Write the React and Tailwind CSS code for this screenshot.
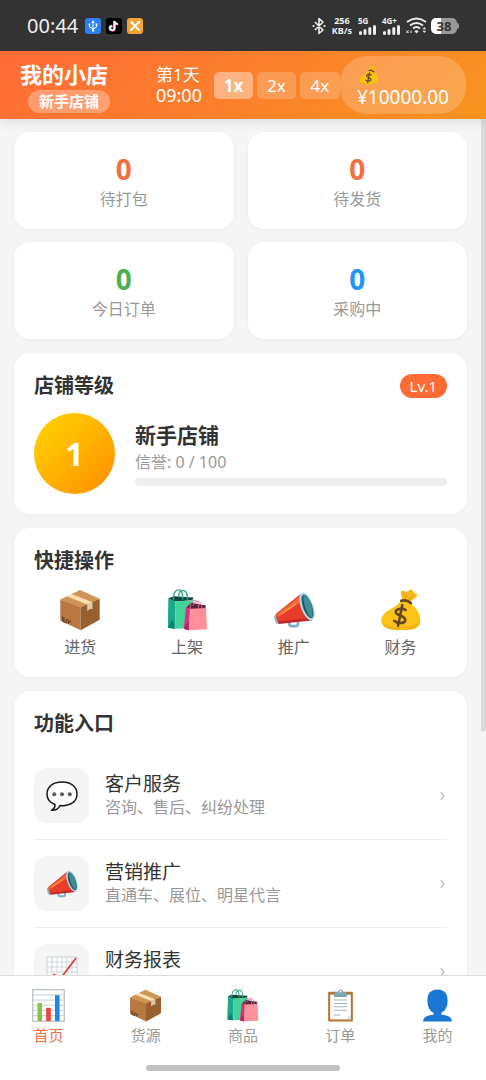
import React from "react";

function BoxIcon({ className }) {
  return (
    <svg viewBox="0 0 128 128" className={className} aria-hidden="true">
      <path d="M4 32 66 54V126L4 96Z" fill="#B87840" />
      <path d="M66 54 124 30V94L66 126Z" fill="#99602F" />
      <path d="M4 32 64 3 124 30 66 56Z" fill="#CF9457" />
      <path d="M24 22 38 15 102 40 86 47Z" fill="#FBE0AE" />
      <path d="M86 47 102 40V62L95 60 86 68Z" fill="#DCC9B0" />
      <path d="M11 84v15l9 4M15 86v14M22 92v13M27 92l-2 3 4 3v9M33 96v4m-2-2 6 3" stroke="#5D3A1C" strokeWidth="3" fill="none" />
    </svg>
  );
}

function BagsIcon({ className }) {
  return (
    <svg viewBox="0 0 128 128" className={className} aria-hidden="true">
      <path d="M8 28 26 22 28 114 6 119Z" fill="#139C82" />
      <path d="M8 28 24 22 84 26 80 34 28 38Z" fill="#12473F" />
      <path d="M28 38 84 34V118L28 121Z" fill="#42D39B" />
      <path d="M8 28 28 38 27 121 6 118Z" fill="#1BA98B" />
      <path d="M6 118 19 92 28 121Z" fill="#0B806D" />
      <path d="M22 33C23 5 34 1 41 3c10 3 10 15 10 29M38 23C38 7 48 3 55 5c11 4 10 15 10 28" stroke="#36A78D" strokeWidth="4" fill="none" />
      <path d="M61 58 76 42 122 50 118 61 73 62Z" fill="#582239" />
      <path d="M61 55 73 60 71 126 54 121Z" fill="#D63578" />
      <path d="M73 60 122 58 125 123 69 126Z" fill="#FF8F9A" />
      <path d="M54 121 67 99 70 126Z" fill="#AF215F" />
      <path d="M73 62C74 34 84 34 91 36c9 3 9 12 8 24M82 51C84 39 93 38 101 39c9 3 8 13 8 20" stroke="#E56F91" strokeWidth="3" fill="none" />
    </svg>
  );
}

function MegaphoneIcon({ className }) {
  return (
    <svg viewBox="0 0 128 128" className={className} aria-hidden="true">
      <path d="M50 92v15q0 6 6 6h14q6 0 6-6V94" fill="none" stroke="#82AEC0" strokeWidth="8" />
      <path d="M3 82 14 73 21 107 10 106Q4 95 3 82Z" fill="#90B8C7" />
      <path d="M10 75 88 12Q99 45 119 94L16 104Q8 88 10 75Z" fill="#E83C2C" />
      <path d="M12 77 90 17 96 32 15 86Z" fill="#FF6533" />
      <path d="M25 76 70 45" stroke="#FF964B" strokeWidth="5" />
      <path d="M17 99 118 87V96L18 107Z" fill="#BD2C2B" />
      <ellipse cx="104" cy="53" rx="19" ry="45" transform="rotate(-20 104 53)" fill="#B7DCE7" />
      <ellipse cx="105" cy="53" rx="14" ry="38" transform="rotate(-20 105 53)" fill="#256774" />
      <path d="M94 18C115 24 127 74 116 88 103 81 89 34 94 18Z" fill="#438B98" />
      <path d="M92 34c4 22 11 43 24 54-14-5-28-40-24-54Z" fill="#164F5D" />
    </svg>
  );
}

function MoneyIcon({ className }) {
  return (
    <svg viewBox="0 0 128 128" className={className} aria-hidden="true">
      <path d="M68 34C67 21 61 12 64 7c5-5 13 2 18 1 7-1 8-8 15-6 4 1 3 6 7 9 5 3 10 5 9 9-1 5-10 9-17 16L87 43Z" fill="#F5B91B" />
      <path d="M76 34 82 17M85 35 101 20" stroke="#D99414" strokeWidth="3" />
      <path d="M65 37Q78 33 95 45C115 61 124 81 123 99 122 119 99 125 66 125 28 125 5 119 4 97 3 74 31 62 45 53 56 47 58 39 65 37Z" fill="#FBC318" />
      <path d="M8 104Q33 119 70 116T122 101C119 120 100 125 67 125 35 125 12 121 8 104Z" fill="#F3B515" />
      <path d="M65 36Q80 31 94 43" stroke="#654526" strokeWidth="8" strokeLinecap="round" fill="none" />
      <path d="M78 64C71 58 51 58 48 69 45 81 78 80 77 94 76 108 52 105 43 97M68 49 55 112" stroke="#654526" strokeWidth="8" strokeLinecap="round" fill="none" />
    </svg>
  );
}

function ChatIcon({ className }) {
  return (
    <svg viewBox="0 0 128 128" className={className} aria-hidden="true">
      <path d="M64 8C27 8 4 28 4 56c0 21 13 35 32 42 1 10-5 18-14 23 18 1 29-8 34-19 42 4 68-16 68-46 0-29-24-48-60-48Z" fill="#fff" stroke="#171717" strokeWidth="6" strokeLinejoin="round" />
      <g fill="#5b5b5b"><circle cx="33" cy="57" r="8" /><circle cx="64" cy="57" r="8" /><circle cx="95" cy="57" r="8" /></g>
    </svg>
  );
}

function TrendIcon({ className }) {
  return (
    <svg viewBox="0 0 128 128" className={className} aria-hidden="true">
      <path d="M4 4H124V124H4Z" fill="#fff" stroke="#B4C0C5" strokeWidth="3" />
      <path d="M24 4v120M44 4v120M64 4v120M84 4v120M104 4v120M4 24h120M4 44h120M4 64h120M4 84h120M4 104h120" stroke="#BECACE" strokeWidth="3" />
      <path d="M6 109 33 74 57 92 120 8" stroke="#D83F3C" strokeWidth="7" fill="none" />
    </svg>
  );
}

function ChartIcon({ className }) {
  return (
    <svg viewBox="0 0 128 128" className={className} aria-hidden="true">
      <path d="M3 3H125V125H3Z" fill="#fff" stroke="#A7B3B9" strokeWidth="4" />
      <path d="M3 23h122M3 43h122M3 63h122M3 83h122M3 103h122" stroke="#B9C5CB" strokeWidth="3" />
      <path d="M21 54h18v70H21Z" fill="#8BC34A" />
      <path d="M55 73h18v51H55Z" fill="#F44336" />
      <path d="M89 24h18v100H89Z" fill="#1E88E5" />
    </svg>
  );
}

function ClipboardIcon({ className }) {
  return (
    <svg viewBox="0 0 128 128" className={className} aria-hidden="true">
      <rect x="16" y="11" width="96" height="115" rx="5" fill="#B87536" />
      <path d="M24 22H104V118H24Z" fill="#fff" />
      <path d="M84 118 104 101V118Z" fill="#CED8DC" />
      <path d="M38 43h52M38 56h52M38 69h52M38 82h52M38 101h26" stroke="#A5B5BE" strokeWidth="4" />
      <path d="M39 29V20q0-6 8-7l7-2q2-10 10-10t10 10l7 2q8 1 8 7v9Z" fill="#80AAB8" />
      <circle cx="64" cy="10" r="4" fill="#fff" />
      <path d="M40 28h48" stroke="#527D8D" strokeWidth="3" />
    </svg>
  );
}

function PersonIcon({ className }) {
  return (
    <svg viewBox="0 0 128 128" className={className} aria-hidden="true">
      <path d="M64 2C37 2 23 20 25 48c1 24 10 37 24 44v8C27 101 9 108 8 126h112c-1-18-19-25-41-26v-8c14-7 23-20 24-44C105 20 91 2 64 2Z" fill="#1976D2" />
    </svg>
  );
}

function UsbIcon() {
  return (
    <svg viewBox="0 0 16 16" className="size-4" aria-hidden="true">
      <rect width="16" height="16" rx="3" fill="#2B80F5" />
      <path d="M8 4v9M4.500 6v3L8 11l3.500-2V6" fill="none" stroke="#fff" />
      <path d="M8 2 6.300 5h3.400Z" fill="#fff" />
      <circle cx="8" cy="12.500" r="1.200" fill="#fff" />
      <circle cx="4.500" cy="6.500" r="1" fill="#fff" />
      <path d="M10.500 5.500h2v2h-2Z" fill="#fff" />
    </svg>
  );
}

function NoteIcon() {
  const d = "M8.500 3v7.200a2.200 2.200 0 1 1-2.200-2.200M8.500 3.200c.3 1.900 1.500 2.800 3.300 3";
  return (
    <svg viewBox="0 0 16 16" className="size-4" aria-hidden="true">
      <rect width="16" height="16" rx="3" fill="#000" />
      <g fill="none" strokeWidth="1.700">
        <path d={d} stroke="#25F4EE" transform="translate(-.6 -.3)" />
        <path d={d} stroke="#FE2C55" transform="translate(.6 .4)" />
        <path d={d} stroke="#fff" />
      </g>
    </svg>
  );
}

function ToolsIcon() {
  return (
    <svg viewBox="0 0 16 16" className="size-4" aria-hidden="true">
      <rect width="16" height="16" rx="3" fill="#F3A432" />
      <path d="m5 5 7 7M12 4l-8 8" stroke="#fff" strokeWidth="1.800" strokeLinecap="round" />
      <path d="M3 4.500 4.500 3l2 1v2l-2 .5Z" fill="#fff" />
      <path d="m10 4 2-1.500L13.500 4 12 6Z" fill="#fff" />
    </svg>
  );
}

function BluetoothIcon() {
  return (
    <svg viewBox="0 0 14 18" className="h-[18px] w-[14px]" aria-hidden="true">
      <path d="m3 5 8 8-4 3.500v-15L11 5l-8 8" fill="none" stroke="#eee" strokeWidth="1.600" strokeLinejoin="round" />
      <circle cx="1.500" cy="9" r="1.100" fill="#eee" />
      <circle cx="12.500" cy="9" r="1.100" fill="#eee" />
    </svg>
  );
}

function Signal({ label }) {
  return (
    <div className="flex w-5 flex-col text-[8px] leading-[8px] font-bold">
      <span>{label}</span>
      <svg viewBox="0 0 19 10" className="h-[10px] w-[19px]" aria-hidden="true">
        <path d="M2.500 7.500v1M7 5.500v3M11.800 3.500v5M16.500 1.500v7" stroke="#eee" strokeWidth="3" strokeLinecap="round" />
      </svg>
    </div>
  );
}

function WifiIcon() {
  return (
    <svg viewBox="0 0 21 17" className="h-[17px] w-[21px]" aria-hidden="true">
      <path d="M1 5q9.500-7 19 0M4 8.500q6.500-5 13 0M7 11.500q3.500-3 7 0" fill="none" stroke="#eee" strokeWidth="1.900" />
      <path d="m8.300 14 2.200 2.500 2.200-2.500q-2.200-1.500-4.400 0Z" fill="#eee" />
      <path d="m.5 13.500 2 2.500m0-2.500-2 2.500M5 13.500v2.500" stroke="#eee" />
      <path d="m16.500 12.300 1.800-2.300 1.800 2.300ZM16.500 13.700l1.800 2.300 1.800-2.300Z" fill="#eee" />
    </svg>
  );
}

function StatusBar() {
  return (
    <div className="flex h-[51px] shrink-0 items-center justify-between bg-[#333] pr-[27px] pl-[27px] text-[#eee]">
      <div className="flex items-center gap-[5px]">
        <span className="mr-[2px] text-[20px] leading-6">00:44</span>
        <UsbIcon />
        <NoteIcon />
        <ToolsIcon />
      </div>
      <div className="flex items-center gap-1">
        <BluetoothIcon />
        <div className="mx-[2px] text-center text-[9px] leading-[10px] font-bold">
          <div>256</div>
          <div>KB/s</div>
        </div>
        <Signal label="5G" />
        <Signal label="4G+" />
        <WifiIcon />
        <div className="flex items-center">
          <span className="h-4 w-[26px] rounded-[5px] bg-linear-to-r from-white from-38% to-[#999] to-38% text-center text-[13px] leading-4 font-bold text-[#333]">38</span>
          <span className="h-[6px] w-[2px] rounded-r bg-[#999]" />
        </div>
      </div>
    </div>
  );
}

function Header() {
  return (
    <header className="z-10 flex shrink-0 items-center justify-between bg-linear-135 from-[#ff6b35] to-[#f7931e] py-[5px] pr-5 pl-5 text-white shadow-[0_3px_11px_rgba(0,0,0,0.1)]">
      <div className="flex flex-col items-start">
        <h1 className="text-[22px] leading-8 font-bold">我的小店</h1>
        <span className="ml-2 rounded-full bg-white/30 px-[11px] text-[15px] leading-[23px] font-bold">新手店铺</span>
      </div>
      <div className="flex items-center">
        <div className="mr-3 text-[17px] leading-[21px]">
          <div>第1天</div>
          <div className="text-[18px]">09:00</div>
        </div>
        <div className="flex gap-1 text-[17px] leading-[27px]">
          <button className="w-[39px] rounded-[5px] bg-white/40 font-bold">1x</button>
          <button className="w-[39px] rounded-[5px] bg-white/20">2x</button>
          <button className="w-[40px] rounded-[5px] bg-white/20">4x</button>
        </div>
        <div className="rounded-[27px] bg-white/20 px-[17px] pt-2 pb-[6px]">
          <MoneyIcon className="my-px ml-[2px] size-5" />
          <div className="text-[19px] leading-[22px]">¥10000.00</div>
        </div>
      </div>
    </header>
  );
}

function Card({ children, className = "" }) {
  return <section className={`rounded-2xl bg-white px-5 pt-[21px] pb-[19px] shadow-[0_1px_4px_rgba(0,0,0,0.04)] ${className}`}>{children}</section>;
}

const stats = [
  { label: "待打包", color: "text-[#f2703f]" },
  { label: "待发货", color: "text-[#f2703f]" },
  { label: "今日订单", color: "text-[#4caf50]" },
  { label: "采购中", color: "text-[#2196f3]" },
];

const quickActions = [
  { label: "进货", Icon: BoxIcon },
  { label: "上架", Icon: BagsIcon },
  { label: "推广", Icon: MegaphoneIcon },
  { label: "财务", Icon: MoneyIcon },
];

const features = [
  { title: "客户服务", detail: "咨询、售后、纠纷处理", Icon: ChatIcon },
  { title: "营销推广", detail: "直通车、展位、明星代言", Icon: MegaphoneIcon },
  { title: "财务报表", detail: "", Icon: TrendIcon },
];

const tabs = [
  { label: "首页", Icon: ChartIcon },
  { label: "货源", Icon: BoxIcon },
  { label: "商品", Icon: BagsIcon },
  { label: "订单", Icon: ClipboardIcon },
  { label: "我的", Icon: PersonIcon },
];

export default function App() {
  return (
    <div className="flex h-screen flex-col overflow-hidden bg-[#f5f5f5] font-['Noto_Sans','Noto_Sans_CJK_SC',sans-serif] text-[#333]">
      <StatusBar />
      <Header />
      <div className="relative min-h-0 flex-1">
        <main className="flex h-full flex-col gap-[14px] overflow-y-auto py-[13px] pr-[19px] pl-[14px] [scrollbar-width:none]">
          <div className="grid grid-cols-2 gap-x-[14px] gap-y-[13px]">
            {stats.map((s) => (
              <Card key={s.label} className="text-center">
                <div className={`text-[28px] leading-[32px] font-bold ${s.color}`}>0</div>
                <div className="mt-[3px] text-[16px] leading-[22px] text-[#999]">{s.label}</div>
              </Card>
            ))}
          </div>

          <Card>
            <div className="flex items-center justify-between">
              <h2 className="text-[20px] leading-6 font-bold">店铺等级</h2>
              <span className="rounded-full bg-[#ff6b35] px-[10px] text-[15px] leading-6 text-white">Lv.1</span>
            </div>
            <div className="mt-[15px] mb-px flex items-center gap-5">
              <div className="flex size-[81px] shrink-0 items-center justify-center rounded-full bg-linear-135 from-[#ffd700] to-[#ff8c00] text-[32px] font-bold text-white">1</div>
              <div className="flex-1">
                <h3 className="text-[21px] leading-[28px] font-bold">新手店铺</h3>
                <div className="text-[16px] leading-[27px] text-[#999]">信誉: 0 / 100</div>
                <div className="mt-[2px] h-2 rounded-full bg-[#eee]" />
              </div>
            </div>
          </Card>

          <Card>
            <h2 className="text-[20px] leading-6 font-bold">快捷操作</h2>
            <div className="mt-4 grid grid-cols-4 gap-[14px]">
              {quickActions.map(({ label, Icon }) => (
                <button key={label} className="flex flex-col items-center gap-[5px] text-[16px] leading-[22px] text-[#666]">
                  <Icon className="size-[42px]" />
                  {label}
                </button>
              ))}
            </div>
          </Card>

          <Card>
            <h2 className="mb-4 text-[20px] leading-6 font-bold">功能入口</h2>
            {features.map(({ title, detail, Icon }) => (
              <a key={title} href="#" className="flex items-center gap-4 border-b border-[#eee] py-4">
                <span className="flex size-[55px] shrink-0 items-center justify-center rounded-[13px] bg-[#f5f5f5]">
                  <Icon className="size-8" />
                </span>
                <span className="flex flex-1 flex-col">
                  <span className="text-[19px] leading-6">{title}</span>
                  <span className="h-[23px] text-[16px] leading-[23px] text-[#999]">{detail}</span>
                </span>
                <svg viewBox="0 0 8 12" className="h-3 w-2" aria-hidden="true">
                  <path d="m2 2 3 4-3 4" fill="none" stroke="#c4c4c4" strokeWidth="1.500" />
                </svg>
              </a>
            ))}
          </Card>
        </main>
        <div className="absolute top-0 right-0 h-[612px] w-[5px] bg-[#dadada]" />
      </div>

      <nav className="shrink-0 border-t border-[#ddd] bg-white pt-[13px]">
        <div className="grid grid-cols-5">
          {tabs.map(({ label, Icon }, i) => (
            <a key={label} href="#" className={`flex flex-col items-center gap-[2px] text-[15px] leading-[22px] ${i === 0 ? "text-[#f2703f]" : "text-[#999]"}`}>
              <Icon className="size-[33px]" />
              {label}
            </a>
          ))}
        </div>
        <div className="mx-auto mt-[19px] mb-[9px] h-[6px] w-2/5 rounded-full bg-[#c1c1c1]" />
      </nav>
    </div>
  );
}
